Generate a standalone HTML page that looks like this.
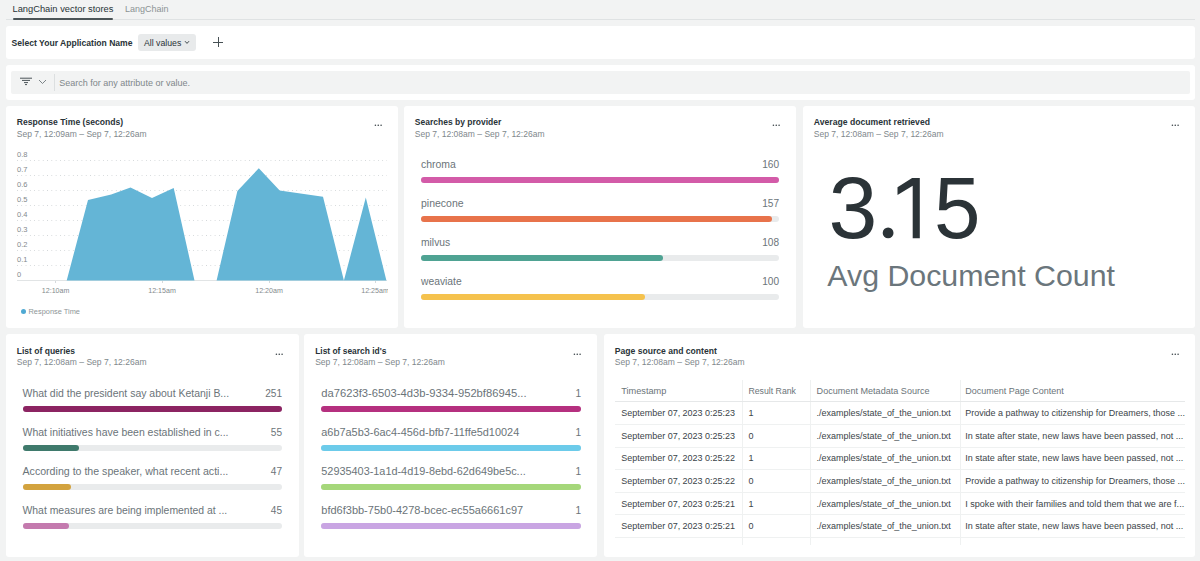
<!DOCTYPE html>
<html><head><meta charset="utf-8"><style>
html,body{margin:0;padding:0;}
body{width:1200px;height:561px;overflow:hidden;background:#f2f3f3;position:relative;font-family:"Liberation Sans",sans-serif;}
.t{position:absolute;white-space:nowrap;line-height:1;}
.r{position:absolute;}
</style></head><body>
<div class="t" style="left:12.50px;top:5px;font-size:9.32px;color:#293338;font-weight:400;">LangChain vector stores</div>
<div class="t" style="left:125.00px;top:5px;font-size:8.99px;color:#8b9294;font-weight:400;">LangChain</div>
<div class="r" style="left:6px;top:19px;width:1189.00px;height:1.00px;background:#dfe2e3;border-radius:0px;"></div>
<div class="r" style="left:12.8px;top:18px;width:100.70px;height:2.00px;background:#4b5457;border-radius:1px;"></div>
<div class="r" style="left:6px;top:25.5px;width:1189.00px;height:33.50px;background:#fff;border-radius:3px;"></div>
<div class="t" style="left:11.60px;top:39px;font-size:8.58px;color:#293338;font-weight:700;">Select Your Application Name</div>
<div class="r" style="left:138px;top:34px;width:58.00px;height:17.00px;background:#e8eaeb;border-radius:3px;"></div>
<div class="t" style="left:144.00px;top:39px;font-size:8.72px;color:#293338;font-weight:400;">All values</div>
<svg class="r" style="left:184px;top:40px" width="6" height="5" viewBox="0 0 6 5"><path d="M1 1.2 L3 3.4 L5 1.2" fill="none" stroke="#293338" stroke-width="0.9"/></svg>
<div class="r" style="left:213.3px;top:42px;width:10.20px;height:1.00px;background:#465054;border-radius:0px;"></div>
<div class="r" style="left:218px;top:37.2px;width:1.00px;height:10.20px;background:#465054;border-radius:0px;"></div>
<div class="r" style="left:6px;top:65px;width:1189.00px;height:35.00px;background:#fff;border-radius:3px;"></div>
<div class="r" style="left:11px;top:71px;width:1179.00px;height:23.00px;background:#f2f3f3;border-radius:2px;"></div>
<svg class="r" style="left:19px;top:76px" width="14" height="10" viewBox="0 0 14 10"><path d="M1 2.2 H13 M3 4.4 H11 M5 6.6 H9 M6 8.6 H8" fill="none" stroke="#4a5358" stroke-width="1"/></svg>
<svg class="r" style="left:38px;top:78px" width="9" height="7" viewBox="0 0 9 7"><path d="M1 2 L4.5 5.5 L8 2" fill="none" stroke="#6e777c" stroke-width="0.9"/></svg>
<div class="r" style="left:54px;top:74px;width:1.00px;height:17.00px;background:#dcdfe0;border-radius:0px;"></div>
<div class="t" style="left:59.20px;top:79px;font-size:9.02px;color:#80878a;font-weight:400;">Search for any attribute or value.</div>
<div class="r" style="left:6px;top:106px;width:392.00px;height:222.00px;background:#fff;border-radius:3px;"></div>
<div class="t" style="left:16.80px;top:118px;font-size:8.61px;color:#293338;font-weight:700;">Response Time (seconds)</div>
<div class="t" style="left:16.80px;top:130px;font-size:8.53px;color:#80888c;font-weight:400;">Sep 7, 12:09am – Sep 7, 12:26am</div>
<svg class="r" style="left:373px;top:122.0px" width="10" height="6" viewBox="0 0 10 6"><circle cx="2.40" cy="3.3" r="0.8" fill="#3b4549"/><circle cx="5.25" cy="3.3" r="0.8" fill="#3b4549"/><circle cx="8.10" cy="3.3" r="0.8" fill="#3b4549"/></svg>
<div class="r" style="left:404px;top:106px;width:392.00px;height:222.00px;background:#fff;border-radius:3px;"></div>
<div class="t" style="left:414.80px;top:118px;font-size:8.51px;color:#293338;font-weight:700;">Searches by provider</div>
<div class="t" style="left:414.80px;top:130px;font-size:8.53px;color:#80888c;font-weight:400;">Sep 7, 12:08am – Sep 7, 12:26am</div>
<svg class="r" style="left:771px;top:122.0px" width="10" height="6" viewBox="0 0 10 6"><circle cx="2.40" cy="3.3" r="0.8" fill="#3b4549"/><circle cx="5.25" cy="3.3" r="0.8" fill="#3b4549"/><circle cx="8.10" cy="3.3" r="0.8" fill="#3b4549"/></svg>
<div class="r" style="left:803px;top:106px;width:392.00px;height:222.00px;background:#fff;border-radius:3px;"></div>
<div class="t" style="left:813.80px;top:118px;font-size:8.63px;color:#293338;font-weight:700;">Average document retrieved</div>
<div class="t" style="left:813.80px;top:130px;font-size:8.53px;color:#80888c;font-weight:400;">Sep 7, 12:08am – Sep 7, 12:26am</div>
<svg class="r" style="left:1170px;top:122.0px" width="10" height="6" viewBox="0 0 10 6"><circle cx="2.40" cy="3.3" r="0.8" fill="#3b4549"/><circle cx="5.25" cy="3.3" r="0.8" fill="#3b4549"/><circle cx="8.10" cy="3.3" r="0.8" fill="#3b4549"/></svg>
<div class="r" style="left:6px;top:334px;width:293.00px;height:223.00px;background:#fff;border-radius:3px;"></div>
<div class="t" style="left:16.80px;top:347px;font-size:8.52px;color:#293338;font-weight:700;">List of queries</div>
<div class="t" style="left:16.80px;top:358px;font-size:8.53px;color:#80888c;font-weight:400;">Sep 7, 12:08am – Sep 7, 12:26am</div>
<svg class="r" style="left:274px;top:350.72px" width="10" height="6" viewBox="0 0 10 6"><circle cx="2.40" cy="3.3" r="0.8" fill="#3b4549"/><circle cx="5.25" cy="3.3" r="0.8" fill="#3b4549"/><circle cx="8.10" cy="3.3" r="0.8" fill="#3b4549"/></svg>
<div class="r" style="left:304.4px;top:334px;width:292.60px;height:223.00px;background:#fff;border-radius:3px;"></div>
<div class="t" style="left:315.20px;top:347px;font-size:8.41px;color:#293338;font-weight:700;">List of search id's</div>
<div class="t" style="left:315.20px;top:358px;font-size:8.53px;color:#80888c;font-weight:400;">Sep 7, 12:08am – Sep 7, 12:26am</div>
<svg class="r" style="left:572px;top:350.72px" width="10" height="6" viewBox="0 0 10 6"><circle cx="2.40" cy="3.3" r="0.8" fill="#3b4549"/><circle cx="5.25" cy="3.3" r="0.8" fill="#3b4549"/><circle cx="8.10" cy="3.3" r="0.8" fill="#3b4549"/></svg>
<div class="r" style="left:604px;top:334px;width:591.00px;height:223.00px;background:#fff;border-radius:3px;"></div>
<div class="t" style="left:614.80px;top:347px;font-size:8.59px;color:#293338;font-weight:700;">Page source and content</div>
<div class="t" style="left:614.80px;top:358px;font-size:8.53px;color:#80888c;font-weight:400;">Sep 7, 12:08am – Sep 7, 12:26am</div>
<svg class="r" style="left:1170px;top:350.72px" width="10" height="6" viewBox="0 0 10 6"><circle cx="2.40" cy="3.3" r="0.8" fill="#3b4549"/><circle cx="5.25" cy="3.3" r="0.8" fill="#3b4549"/><circle cx="8.10" cy="3.3" r="0.8" fill="#3b4549"/></svg>
<div class="t" style="left:17.00px;top:151px;font-size:7.50px;color:#838a8d;font-weight:400;">0.8</div>
<div class="r" style="left:17px;top:160.0px;width:370px;height:1px;background-image:linear-gradient(to right,#d3d7d9 1.2px,transparent 1.2px);background-size:4.3px 1px"></div>
<div class="t" style="left:17.00px;top:166px;font-size:7.50px;color:#838a8d;font-weight:400;">0.7</div>
<div class="r" style="left:17px;top:175.0px;width:370px;height:1px;background-image:linear-gradient(to right,#d3d7d9 1.2px,transparent 1.2px);background-size:4.3px 1px"></div>
<div class="t" style="left:17.00px;top:181px;font-size:7.50px;color:#838a8d;font-weight:400;">0.6</div>
<div class="r" style="left:17px;top:190.0px;width:370px;height:1px;background-image:linear-gradient(to right,#d3d7d9 1.2px,transparent 1.2px);background-size:4.3px 1px"></div>
<div class="t" style="left:17.00px;top:196px;font-size:7.50px;color:#838a8d;font-weight:400;">0.5</div>
<div class="r" style="left:17px;top:205.0px;width:370px;height:1px;background-image:linear-gradient(to right,#d3d7d9 1.2px,transparent 1.2px);background-size:4.3px 1px"></div>
<div class="t" style="left:17.00px;top:211px;font-size:7.50px;color:#838a8d;font-weight:400;">0.4</div>
<div class="r" style="left:17px;top:220.0px;width:370px;height:1px;background-image:linear-gradient(to right,#d3d7d9 1.2px,transparent 1.2px);background-size:4.3px 1px"></div>
<div class="t" style="left:17.00px;top:226px;font-size:7.50px;color:#838a8d;font-weight:400;">0.3</div>
<div class="r" style="left:17px;top:235.0px;width:370px;height:1px;background-image:linear-gradient(to right,#d3d7d9 1.2px,transparent 1.2px);background-size:4.3px 1px"></div>
<div class="t" style="left:17.00px;top:241px;font-size:7.50px;color:#838a8d;font-weight:400;">0.2</div>
<div class="r" style="left:17px;top:250.0px;width:370px;height:1px;background-image:linear-gradient(to right,#d3d7d9 1.2px,transparent 1.2px);background-size:4.3px 1px"></div>
<div class="t" style="left:17.00px;top:256px;font-size:7.50px;color:#838a8d;font-weight:400;">0.1</div>
<div class="r" style="left:17px;top:265.0px;width:370px;height:1px;background-image:linear-gradient(to right,#d3d7d9 1.2px,transparent 1.2px);background-size:4.3px 1px"></div>
<div class="t" style="left:17.00px;top:271px;font-size:7.50px;color:#838a8d;font-weight:400;">0</div>
<div class="r" style="left:17px;top:280px;width:370.00px;height:1.00px;background:#e1e4e5;border-radius:0px;"></div>
<svg class="r" style="left:0;top:0" width="400" height="330"><polygon points="66.7,280.5 88.0,200.0 111.2,194.5 130.5,187.5 152.0,198.0 173.7,188.0 194.5,280.5" fill="#64b5d6"/><polygon points="216.6,280.5 237.4,190.9 258.8,168.2 279.7,190.6 323.0,196.8 343.9,280.5 365.8,197.6 386.4,280.5" fill="#64b5d6"/></svg>
<div class="r" style="left:0;top:270px;width:387.5px;height:40px;overflow:hidden">
<div class="r" style="left:55.1px;top:11px;width:1px;height:2px;background:#d5d9db"></div>
<div class="t" style="left:35.6px;width:40px;text-align:center;top:18.18984999999999px;font-size:7.1px;color:#838a8d">12:10am</div>
<div class="r" style="left:161.5px;top:11px;width:1px;height:2px;background:#d5d9db"></div>
<div class="t" style="left:142px;width:40px;text-align:center;top:18.18984999999999px;font-size:7.1px;color:#838a8d">12:15am</div>
<div class="r" style="left:268.5px;top:11px;width:1px;height:2px;background:#d5d9db"></div>
<div class="t" style="left:249px;width:40px;text-align:center;top:18.18984999999999px;font-size:7.1px;color:#838a8d">12:20am</div>
<div class="r" style="left:374.5px;top:11px;width:1px;height:2px;background:#d5d9db"></div>
<div class="t" style="left:355px;width:40px;text-align:center;top:18.18984999999999px;font-size:7.1px;color:#838a8d">12:25am</div>
</div>
<div class="r" style="left:20.6px;top:308.6px;width:5px;height:5px;border-radius:50%;background:#4fa9d3"></div>
<div class="t" style="left:28.50px;top:308px;font-size:7.41px;color:#8e9597;font-weight:400;">Response Time</div>
<div class="t" style="left:421.00px;top:160px;font-size:10.44px;color:#6b7479;font-weight:400;">chroma</div>
<div class="t" style="right:421.00px;top:160px;font-size:10.10px;color:#6b7479;font-weight:400;">160</div>
<div class="r" style="left:421px;top:177px;width:358.00px;height:6.00px;background:#e9ebec;border-radius:3px;"></div>
<div class="r" style="left:421px;top:177px;width:358.00px;height:6.00px;background:#d35ba8;border-radius:3px;"></div>
<div class="t" style="left:421.00px;top:199px;font-size:10.49px;color:#6b7479;font-weight:400;">pinecone</div>
<div class="t" style="right:421.00px;top:199px;font-size:10.10px;color:#6b7479;font-weight:400;">157</div>
<div class="r" style="left:421px;top:216px;width:358.00px;height:6.00px;background:#e9ebec;border-radius:3px;"></div>
<div class="r" style="left:421px;top:216px;width:351.29px;height:6.00px;background:#e8734b;border-radius:3px;"></div>
<div class="t" style="left:421.00px;top:238px;font-size:10.30px;color:#6b7479;font-weight:400;">milvus</div>
<div class="t" style="right:421.00px;top:238px;font-size:10.10px;color:#6b7479;font-weight:400;">108</div>
<div class="r" style="left:421px;top:255px;width:358.00px;height:6.00px;background:#e9ebec;border-radius:3px;"></div>
<div class="r" style="left:421px;top:255px;width:241.65px;height:6.00px;background:#4fa393;border-radius:3px;"></div>
<div class="t" style="left:421.00px;top:277px;font-size:10.30px;color:#6b7479;font-weight:400;">weaviate</div>
<div class="t" style="right:421.00px;top:277px;font-size:10.10px;color:#6b7479;font-weight:400;">100</div>
<div class="r" style="left:421px;top:294px;width:358.00px;height:6.00px;background:#e9ebec;border-radius:3px;"></div>
<div class="r" style="left:421px;top:294px;width:223.75px;height:6.00px;background:#f5c24d;border-radius:3px;"></div>
<div class="t" style="left:828.6px;top:165px;font-size:87.8px;color:#2b3337">3</div>
<div class="t" style="left:933.8px;top:164px;font-size:87px;color:#2b3337;transform:scaleX(0.96);transform-origin:0 0">5</div>
<svg class="r" style="left:0;top:0" width="1200" height="330"><path d="M912.1,178.1 L919.8,178.1 L919.8,238.3 L912.7,238.3 L912.7,185.8 L897.5,195 L897.5,187.3 Z" fill="#2b3337"/><circle cx="888.1" cy="232.9" r="5.4" fill="#2b3337"/></svg>
<div class="t" style="left:827.30px;top:261px;font-size:30.33px;color:#6b767c;font-weight:400;">Avg Document Count</div>
<div class="t" style="left:22.50px;top:389px;font-size:10.48px;color:#6b7479;font-weight:400;">What did the president say about Ketanji B...</div>
<div class="t" style="right:918.00px;top:389px;font-size:10.10px;color:#6b7479;font-weight:400;">251</div>
<div class="r" style="left:22.5px;top:406px;width:259.50px;height:6.00px;background:#e9ebec;border-radius:3px;"></div>
<div class="r" style="left:22.5px;top:406px;width:259.50px;height:6.00px;background:#8c2462;border-radius:3px;"></div>
<div class="t" style="left:22.50px;top:428px;font-size:10.48px;color:#6b7479;font-weight:400;">What initiatives have been established in c...</div>
<div class="t" style="right:918.00px;top:428px;font-size:10.10px;color:#6b7479;font-weight:400;">55</div>
<div class="r" style="left:22.5px;top:445px;width:259.50px;height:6.00px;background:#e9ebec;border-radius:3px;"></div>
<div class="r" style="left:22.5px;top:445px;width:56.86px;height:6.00px;background:#3f7a6c;border-radius:3px;"></div>
<div class="t" style="left:22.50px;top:466px;font-size:10.61px;color:#6b7479;font-weight:400;">According to the speaker, what recent acti...</div>
<div class="t" style="right:918.00px;top:467px;font-size:10.10px;color:#6b7479;font-weight:400;">47</div>
<div class="r" style="left:22.5px;top:484px;width:259.50px;height:6.00px;background:#e9ebec;border-radius:3px;"></div>
<div class="r" style="left:22.5px;top:484px;width:48.59px;height:6.00px;background:#d3a33e;border-radius:3px;"></div>
<div class="t" style="left:22.50px;top:506px;font-size:10.42px;color:#6b7479;font-weight:400;">What measures are being implemented at ...</div>
<div class="t" style="right:918.00px;top:506px;font-size:10.10px;color:#6b7479;font-weight:400;">45</div>
<div class="r" style="left:22.5px;top:523px;width:259.50px;height:6.00px;background:#e9ebec;border-radius:3px;"></div>
<div class="r" style="left:22.5px;top:523px;width:46.52px;height:6.00px;background:#c47aae;border-radius:3px;"></div>
<div class="t" style="left:321.30px;top:388px;font-size:11.23px;color:#6b7479;font-weight:400;">da7623f3-6503-4d3b-9334-952bf86945...</div>
<div class="t" style="right:619.00px;top:389px;font-size:10.10px;color:#6b7479;font-weight:400;">1</div>
<div class="r" style="left:321.3px;top:406px;width:259.70px;height:6.00px;background:#e9ebec;border-radius:3px;"></div>
<div class="r" style="left:321.3px;top:406px;width:259.70px;height:6.00px;background:#b5307f;border-radius:3px;"></div>
<div class="t" style="left:321.30px;top:427px;font-size:10.91px;color:#6b7479;font-weight:400;">a6b7a5b3-6ac4-456d-bfb7-11ffe5d10024</div>
<div class="t" style="right:619.00px;top:428px;font-size:10.10px;color:#6b7479;font-weight:400;">1</div>
<div class="r" style="left:321.3px;top:445px;width:259.70px;height:6.00px;background:#e9ebec;border-radius:3px;"></div>
<div class="r" style="left:321.3px;top:445px;width:259.70px;height:6.00px;background:#6ccbea;border-radius:3px;"></div>
<div class="t" style="left:321.30px;top:466px;font-size:10.89px;color:#6b7479;font-weight:400;">52935403-1a1d-4d19-8ebd-62d649be5c...</div>
<div class="t" style="right:619.00px;top:467px;font-size:10.10px;color:#6b7479;font-weight:400;">1</div>
<div class="r" style="left:321.3px;top:484px;width:259.70px;height:6.00px;background:#e9ebec;border-radius:3px;"></div>
<div class="r" style="left:321.3px;top:484px;width:259.70px;height:6.00px;background:#a5d77a;border-radius:3px;"></div>
<div class="t" style="left:321.30px;top:505px;font-size:11.01px;color:#6b7479;font-weight:400;">bfd6f3bb-75b0-4278-bcec-ec55a6661c97</div>
<div class="t" style="right:619.00px;top:506px;font-size:10.10px;color:#6b7479;font-weight:400;">1</div>
<div class="r" style="left:321.3px;top:523px;width:259.70px;height:6.00px;background:#e9ebec;border-radius:3px;"></div>
<div class="r" style="left:321.3px;top:523px;width:259.70px;height:6.00px;background:#c9a5e3;border-radius:3px;"></div>
<div class="r" style="left:742px;top:379.5px;width:1.00px;height:165.50px;background:#eff1f1;border-radius:0px;"></div>
<div class="r" style="left:810px;top:379.5px;width:1.00px;height:165.50px;background:#eff1f1;border-radius:0px;"></div>
<div class="r" style="left:959.5px;top:379.5px;width:1.00px;height:165.50px;background:#eff1f1;border-radius:0px;"></div>
<div class="t" style="left:621.20px;top:387px;font-size:9.21px;color:#6b7479;font-weight:400;">Timestamp</div>
<div class="t" style="left:748.40px;top:387px;font-size:8.74px;color:#6b7479;font-weight:400;">Result Rank</div>
<div class="t" style="left:816.60px;top:387px;font-size:9.09px;color:#6b7479;font-weight:400;">Document Metadata Source</div>
<div class="t" style="left:965.20px;top:387px;font-size:9.00px;color:#6b7479;font-weight:400;">Document Page Content</div>
<div class="r" style="left:614.8px;top:401px;width:570.20px;height:1.00px;background:#e6e8e9;border-radius:0px;"></div>
<div class="t" style="left:621.20px;top:409px;font-size:8.99px;color:#3b4449;font-weight:400;">September 07, 2023 0:25:23</div>
<div class="t" style="left:748.40px;top:409px;font-size:9.00px;color:#3b4449;font-weight:400;">1</div>
<div class="t" style="left:816.60px;top:409px;font-size:8.97px;color:#3b4449;font-weight:400;">./examples/state_of_the_union.txt</div>
<div class="t" style="left:965.20px;top:409px;font-size:8.97px;color:#3b4449;font-weight:400;">Provide a pathway to citizenship for Dreamers, those ...</div>
<div class="r" style="left:614.8px;top:423.92px;width:570.20px;height:1.00px;background:#eff1f1;border-radius:0px;"></div>
<div class="t" style="left:621.20px;top:432px;font-size:8.99px;color:#3b4449;font-weight:400;">September 07, 2023 0:25:23</div>
<div class="t" style="left:748.40px;top:432px;font-size:9.00px;color:#3b4449;font-weight:400;">0</div>
<div class="t" style="left:816.60px;top:432px;font-size:8.97px;color:#3b4449;font-weight:400;">./examples/state_of_the_union.txt</div>
<div class="t" style="left:965.20px;top:432px;font-size:9.02px;color:#3b4449;font-weight:400;">In state after state, new laws have been passed, not ...</div>
<div class="r" style="left:614.8px;top:446.54px;width:570.20px;height:1.00px;background:#eff1f1;border-radius:0px;"></div>
<div class="t" style="left:621.20px;top:454px;font-size:8.99px;color:#3b4449;font-weight:400;">September 07, 2023 0:25:22</div>
<div class="t" style="left:748.40px;top:454px;font-size:9.00px;color:#3b4449;font-weight:400;">1</div>
<div class="t" style="left:816.60px;top:454px;font-size:8.97px;color:#3b4449;font-weight:400;">./examples/state_of_the_union.txt</div>
<div class="t" style="left:965.20px;top:454px;font-size:9.02px;color:#3b4449;font-weight:400;">In state after state, new laws have been passed, not ...</div>
<div class="r" style="left:614.8px;top:469.16px;width:570.20px;height:1.00px;background:#eff1f1;border-radius:0px;"></div>
<div class="t" style="left:621.20px;top:477px;font-size:8.99px;color:#3b4449;font-weight:400;">September 07, 2023 0:25:22</div>
<div class="t" style="left:748.40px;top:477px;font-size:9.00px;color:#3b4449;font-weight:400;">0</div>
<div class="t" style="left:816.60px;top:477px;font-size:8.97px;color:#3b4449;font-weight:400;">./examples/state_of_the_union.txt</div>
<div class="t" style="left:965.20px;top:477px;font-size:8.97px;color:#3b4449;font-weight:400;">Provide a pathway to citizenship for Dreamers, those ...</div>
<div class="r" style="left:614.8px;top:491.78000000000003px;width:570.20px;height:1.00px;background:#eff1f1;border-radius:0px;"></div>
<div class="t" style="left:621.20px;top:500px;font-size:8.99px;color:#3b4449;font-weight:400;">September 07, 2023 0:25:21</div>
<div class="t" style="left:748.40px;top:500px;font-size:9.00px;color:#3b4449;font-weight:400;">1</div>
<div class="t" style="left:816.60px;top:500px;font-size:8.97px;color:#3b4449;font-weight:400;">./examples/state_of_the_union.txt</div>
<div class="t" style="left:965.20px;top:500px;font-size:9.08px;color:#3b4449;font-weight:400;">I spoke with their families and told them that we are f...</div>
<div class="r" style="left:614.8px;top:514.4px;width:570.20px;height:1.00px;background:#eff1f1;border-radius:0px;"></div>
<div class="t" style="left:621.20px;top:522px;font-size:8.99px;color:#3b4449;font-weight:400;">September 07, 2023 0:25:21</div>
<div class="t" style="left:748.40px;top:522px;font-size:9.00px;color:#3b4449;font-weight:400;">0</div>
<div class="t" style="left:816.60px;top:522px;font-size:8.97px;color:#3b4449;font-weight:400;">./examples/state_of_the_union.txt</div>
<div class="t" style="left:965.20px;top:522px;font-size:9.02px;color:#3b4449;font-weight:400;">In state after state, new laws have been passed, not ...</div>
<div class="r" style="left:614.8px;top:537.02px;width:570.20px;height:1.00px;background:#eff1f1;border-radius:0px;"></div>
</body></html>
